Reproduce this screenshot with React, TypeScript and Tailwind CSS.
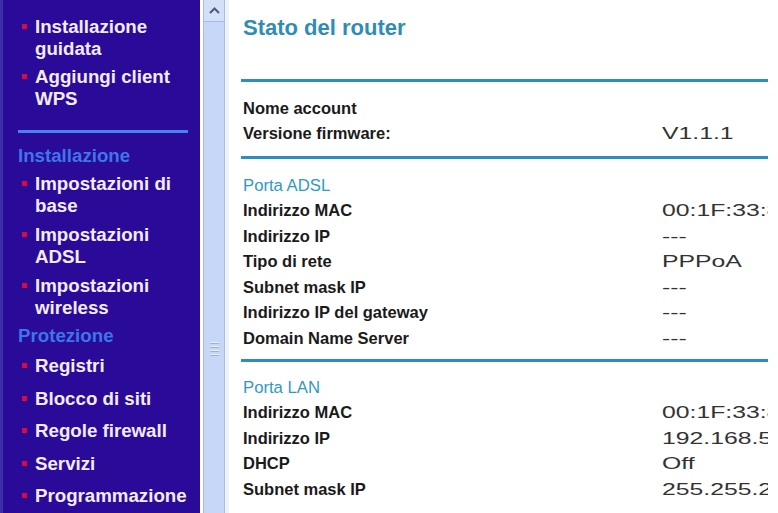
import React from 'react'

const font = { fontFamily: '"Liberation Sans", Arial, sans-serif' }

function Bullet() {
  return <span className="absolute left-[4px] top-[8px] h-[5px] w-[5px] bg-[#dc0a3c]" />
}

function Item({ lines, className = '' }: { lines: string[]; className?: string }) {
  return (
    <div className={`relative pl-[17px] text-[18.7px] font-bold leading-[22px] text-[#f3ecff] ${className}`}>
      <Bullet />
      {lines.map((l) => (
        <div key={l} className="whitespace-nowrap">
          {l}
        </div>
      ))}
    </div>
  )
}

function SectionTitle({ children, className = '' }: { children: React.ReactNode; className?: string }) {
  return (
    <div className={`text-[18.7px] font-bold leading-[22px] text-[#3d76ea] ${className}`}>{children}</div>
  )
}

function Sidebar() {
  return (
    <div className="h-[513px] w-[200px] shrink-0 overflow-hidden border-l-[3px] border-[#3f2ca8] bg-[#2a0a98] pl-[15px] pt-[16px]">
      <Item lines={['Installazione', 'guidata']} />
      <Item lines={['Aggiungi client', 'WPS']} className="mt-[6px]" />
      <div className="mt-[20px] h-[3px] w-[170px] bg-[#4a80f0]" />
      <SectionTitle className="mt-[12px]">Installazione</SectionTitle>
      <Item lines={['Impostazioni di', 'base']} className="mt-[6px]" />
      <Item lines={['Impostazioni', 'ADSL']} className="mt-[7px]" />
      <Item lines={['Impostazioni', 'wireless']} className="mt-[7px]" />
      <SectionTitle className="mt-[6px]">Protezione</SectionTitle>
      <Item lines={['Registri']} className="mt-[8px]" />
      <Item lines={['Blocco di siti']} className="mt-[11px]" />
      <Item lines={['Regole firewall']} className="mt-[10px]" />
      <Item lines={['Servizi']} className="mt-[11px]" />
      <Item lines={['Programmazione']} className="mt-[10px]" />
    </div>
  )
}

function Scrollbar() {
  return (
    <div className="flex h-[513px] w-[30px] shrink-0 bg-white pl-[3px]">
      <div className="flex w-[22px] flex-col border-x border-[#a9bbe0] bg-[#c7d7f8]">
        <div className="flex h-[22px] items-center justify-center border-b border-[#a9bbe0] bg-[#d4e0f7]">
          <svg width="11" height="7" viewBox="0 0 11 7">
            <path d="M1 6 L5.5 1.5 L10 6" fill="none" stroke="#4a5d80" strokeWidth="2" />
          </svg>
        </div>
        <div className="flex flex-1 flex-col items-center pt-[320px]">
          {[0, 1, 2, 3].map((i) => (
            <div key={i} className="mb-[2px] h-[2px] w-[9px] border-b border-[#9fb0d6] bg-[#e8eefc]" />
          ))}
        </div>
      </div>
      <div className="w-[4px] bg-[#eef2fa]" />
    </div>
  )
}

function Row({ label, value }: { label: string; value: string }) {
  return (
    <div className="flex h-[25.5px] items-center whitespace-nowrap pl-[2px]">
      <div className="w-[419px] shrink-0 text-[16.5px] font-bold text-[#1a1a1a]">{label}</div>
      <div className="inline-block origin-left scale-x-150 text-[16.5px] text-[#333]">{value}</div>
    </div>
  )
}

function Divider({ className = '' }: { className?: string }) {
  return <div className={`h-[3px] w-full bg-[#2b8ec0] ${className}`} />
}

function Sub({ children, className = '' }: { children: React.ReactNode; className?: string }) {
  return (
    <div className={`flex h-[25.5px] items-center pl-[2px] text-[16.7px] text-[#2e9ac4] ${className}`}>
      {children}
    </div>
  )
}

function Content() {
  return (
    <div className="h-[513px] w-[538px] shrink-0 overflow-hidden bg-white pl-[11px]">
      <div className="flex h-[56px] items-center pb-[1px] pl-[2px] text-[22px] font-bold text-[#2f8cb7]">
        Stato del router
      </div>
      <Divider className="mt-[23px]" />
      <div className="mt-[13.5px]">
        <Row label="Nome account" value="" />
        <Row label="Versione firmware:" value="V1.1.1" />
      </div>
      <Divider className="mt-[9px]" />
      <Sub className="mt-[14px]">Porta ADSL</Sub>
      <Row label="Indirizzo MAC" value="00:1F:33:8B:2C:4A" />
      <Row label="Indirizzo IP" value="---" />
      <Row label="Tipo di rete" value="PPPoA" />
      <Row label="Subnet mask IP" value="---" />
      <Row label="Indirizzo IP del gateway" value="---" />
      <Row label="Domain Name Server" value="---" />
      <Divider className="mt-[7.5px]" />
      <Sub className="mt-[13px]">Porta LAN</Sub>
      <Row label="Indirizzo MAC" value="00:1F:33:8B:2C:4B" />
      <Row label="Indirizzo IP" value="192.168.5.1" />
      <Row label="DHCP" value="Off" />
      <Row label="Subnet mask IP" value="255.255.255.0" />
    </div>
  )
}

export default function App() {
  return (
    <div className="flex h-[513px] w-[778px] overflow-hidden bg-white" style={font}>
      <Sidebar />
      <Scrollbar />
      <Content />
      <div className="flex-1 bg-white" />
    </div>
  )
}
